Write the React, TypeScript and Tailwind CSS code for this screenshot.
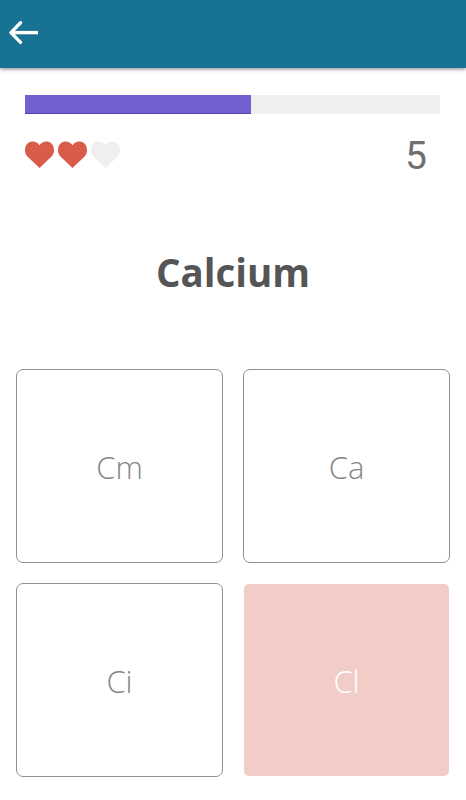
const HEARTS = [
  { id: 'first', color: '#d95c4a' },
  { id: 'second', color: '#d95c4a' },
  { id: 'third', color: '#efefef' },
]

const ANSWERS = [
  { symbol: 'Cm', wrong: false },
  { symbol: 'Ca', wrong: false },
  { symbol: 'Ci', wrong: false },
  { symbol: 'Cl', wrong: true },
]

function Heart({ color }: { color: string }) {
  return (
    <svg width="29" height="28" viewBox="0 0 29 28" fill={color}>
      <path d="M14.5 27 L2.4 15.6 C-0.9 12.4 -0.8 5.2 2.6 2.4 C5.8 -0.4 11.6 -0.3 14.5 4.2 C17.4 -0.3 23.2 -0.4 26.4 2.4 C29.8 5.2 29.9 12.4 26.6 15.6 Z" />
    </svg>
  )
}

function AnswerCard({ symbol, wrong }: { symbol: string; wrong: boolean }) {
  return (
    <button
      className={
        wrong
          ? 'm-px flex items-center justify-center rounded-[5px] bg-[#f2cdc8] text-white'
          : 'flex items-center justify-center rounded-[7px] border border-[#8f8f8f] bg-white text-[#868686]'
      }
    >
      <span className="pt-0.5 text-[31px] leading-none font-light">{symbol}</span>
    </button>
  )
}

export default function App() {
  return (
    <div className="flex h-[800px] w-[466px] flex-col bg-white font-['Open_Sans',sans-serif]">
      <header className="flex h-[68px] shrink-0 items-center bg-[#177293] pl-[9px] shadow-[0_1px_4px_rgba(0,0,0,0.5)]">
        <button aria-label="Back" className="mb-[3px]">
          <svg width="30" height="24" viewBox="0 0 30 24" fill="none" stroke="white" strokeWidth="3.4">
            <path d="M2 11.6 H29" />
            <path d="M11.5 1.8 L2 11.6 L11.5 21.4" strokeLinecap="round" strokeLinejoin="round" />
          </svg>
        </button>
      </header>

      <div className="mx-[25px] mt-[27px] h-[19px] w-[415px] shrink-0 bg-[#efefef]">
        <div className="h-full w-[226px] border-b border-[#5940b8] bg-[#7060d2]" />
      </div>

      <div className="mt-5 flex h-[42px] shrink-0 items-center justify-between pr-[39px] pl-[25px]">
        <div className="flex gap-1">
          {HEARTS.map(({ id, color }) => (
            <Heart key={id} color={color} />
          ))}
        </div>
        <span className="pt-0.5 font-[Roboto,sans-serif] text-[39px] leading-none text-[#6f6f6f]">5</span>
      </div>

      <h1 className="mt-[76px] h-[40px] text-center text-[38.5px] leading-[40px] font-bold text-[#555]">Calcium</h1>

      <div className="mt-[77px] ml-4 grid w-[434px] grid-cols-2 grid-rows-[194px_194px] gap-5">
        {ANSWERS.map(({ symbol, wrong }) => (
          <AnswerCard key={symbol} symbol={symbol} wrong={wrong} />
        ))}
      </div>
    </div>
  )
}
